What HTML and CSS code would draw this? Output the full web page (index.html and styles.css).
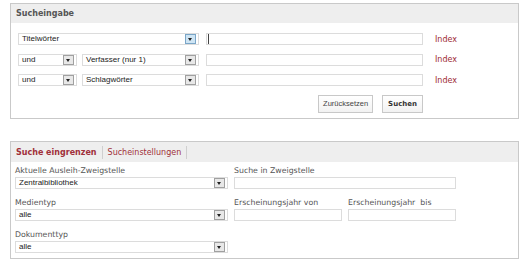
FILE: index.html
```html
<!DOCTYPE html>
<html lang="de">
<head>
    <meta charset="UTF-8">
    <title>Katalogsuche</title>
    <link rel="stylesheet" href="styles.css">
</head>
<body>
    <div class="panel search">
        <div class="panel-head">
            <h3>Sucheingabe</h3>
        </div>
        <div class="panel-body">
            <div class="row">
                <div class="select field-wide">Titelwörter<span class="arrow active"></span></div>
                <div class="text-input"><span class="caret"></span></div>
                <a class="index" href="#">Index</a>
            </div>
            <div class="row">
                <div class="select field-op">und<span class="arrow"></span></div>
                <div class="select field-cat">Verfasser (nur 1)<span class="arrow"></span></div>
                <div class="text-input"></div>
                <a class="index" href="#">Index</a>
            </div>
            <div class="row">
                <div class="select field-op">und<span class="arrow"></span></div>
                <div class="select field-cat">Schlagwörter<span class="arrow"></span></div>
                <div class="text-input"></div>
                <a class="index" href="#">Index</a>
            </div>
            <div class="actions">
                <button type="button">Zurücksetzen</button>
                <button type="button" class="primary">Suchen</button>
            </div>
        </div>
    </div>

    <div class="panel limit">
        <div class="panel-head tabs">
            <span class="tab current">Suche eingrenzen</span>
            <span class="tab">Sucheinstellungen</span>
        </div>
        <div class="panel-body grid">
            <div class="col-left">
                <label>Aktuelle Ausleih-Zweigstelle</label>
                <div class="select">Zentralbibliothek<span class="arrow"></span></div>
                <label>Medientyp</label>
                <div class="select">alle<span class="arrow"></span></div>
                <label>Dokumenttyp</label>
                <div class="select">alle<span class="arrow"></span></div>
            </div>
            <div class="col-right">
                <label>Suche in Zweigstelle</label>
                <div class="text-input"></div>
                <div class="years">
                    <div>
                        <label>Erscheinungsjahr von</label>
                        <div class="text-input"></div>
                    </div>
                    <div>
                        <label>Erscheinungsjahr &nbsp;bis</label>
                        <div class="text-input"></div>
                    </div>
                </div>
            </div>
        </div>
    </div>
</body>
</html>
```

FILE: styles.css
```css
body {
    margin: 0;
    padding: 3px 9px 0 10px;
    background: #fff;
    font-family: "DejaVu Sans", Verdana, sans-serif;
    color: #555;
}
.panel {
    border: 1px solid #c9c9c9;
    background: #fff;
}
.panel.search {
    height: 114px;
}
.panel.limit {
    margin-top: 22px;
    height: 116px;
}
.panel-head {
    background: #eeeeee;
    height: 19px;
    display: flex;
    align-items: center;
    padding-left: 5px;
}
.panel-head h3 {
    margin: 0;
    font-size: 8px;
    font-weight: bold;
    color: #555;
}
.panel-body {
    padding: 10px 0 0 7px;
}
.row {
    display: flex;
    align-items: center;
    height: 12px;
    margin-bottom: 8.5px;
}
.select {
    position: relative;
    box-sizing: border-box;
    height: 12px;
    border: 1px solid #dcdcdc;
    background: #fff;
    font-family: "Liberation Sans", Arial, sans-serif;
    font-size: 8px;
    color: #222;
    line-height: 10px;
    padding-left: 3px;
    white-space: nowrap;
}
.arrow {
    position: absolute;
    right: 2px;
    top: 0;
    width: 9px;
    height: 8px;
    border: 1px solid #a0a0a0;
    background: #e8e8e8;
}
.arrow::after {
    content: "";
    position: absolute;
    left: 2px;
    top: 3px;
    border-left: 2.5px solid transparent;
    border-right: 2.5px solid transparent;
    border-top: 3px solid #222;
}
.arrow.active {
    background: #cfe5f4;
    border-color: #7aa6c8;
}
.field-wide {
    width: 181px;
}
.field-op {
    width: 59px;
    margin-right: 5px;
}
.field-cat {
    width: 117px;
}
.text-input {
    position: relative;
    box-sizing: border-box;
    height: 12px;
    border: 1px solid #dcdcdc;
    background: #fff;
}
.row .text-input {
    width: 217px;
    margin-left: 7px;
}
.caret {
    position: absolute;
    left: 1px;
    top: 0;
    width: 1px;
    height: 10px;
    background: #444;
}
.index {
    margin-left: 12px;
    font-size: 8px;
    color: #9e2b34;
    text-decoration: none;
}
.actions {
    display: flex;
    justify-content: flex-end;
    width: 405px;
    gap: 9px;
    margin-top: 1px;
}
button {
    box-sizing: border-box;
    height: 18px;
    padding: 0 4px;
    border: 1px solid #c8c8c8;
    background: linear-gradient(#ffffff, #f2f2f2);
    font-family: "Liberation Sans", Arial, sans-serif;
    font-size: 7.5px;
    color: #444;
}
button.primary {
    font-family: "DejaVu Sans", Verdana, sans-serif;
    font-weight: bold;
    font-size: 7px;
    color: #333;
    padding: 0 5px;
}
.tabs {
    height: 20px;
    padding-left: 5px;
}
.tab {
    font-size: 8px;
    color: #a0303a;
    padding: 0 5px;
    border-right: 1px solid #cfcfcf;
    line-height: 13px;
}
.tab:first-child {
    padding-left: 0;
}
.tab.current {
    font-weight: bold;
}
.grid {
    display: flex;
    gap: 6px;
    padding: 4px 0 0 4px;
}
.col-left {
    width: 213px;
}
.col-right {
    width: 222px;
}
label {
    display: block;
    font-size: 7.8px;
    color: #555;
    line-height: 9px;
    margin-bottom: 2px;
}
.col-left .select,
.col-right > .text-input {
    margin-bottom: 9px;
}
.years {
    display: flex;
    gap: 6px;
}
.years > div {
    width: 108px;
}
```
